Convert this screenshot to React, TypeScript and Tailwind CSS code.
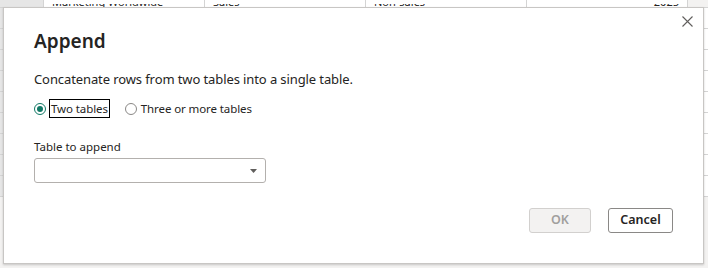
const font = { fontFamily: '"Noto Sans", "Open Sans", Arial, sans-serif' };

function SheetBackground() {
  const rows = Array.from({ length: 9 });
  return (
    <div className="absolute inset-0 flex flex-col bg-[#f3f2f1]">
      <div className="flex h-[8px] overflow-hidden border-b border-[#d4d4d4]">
        <div className="w-[44px] shrink-0 border-r border-[#d4d4d4] bg-[#e6e6e6]" />
        {["Marketing Worldwide", "Sales", "Non-sales", "2025"].map((t, i) => (
          <div
            key={i}
            className={`flex w-[161px] shrink-0 flex-col border-r border-[#d4d4d4] bg-white px-2 pt-[4px] ${
              i === 3 ? "text-right" : ""
            }`}
          >
            {/* only the bottom edge of the cell text peeks out above the dialog */}
            <div className="flex h-[3px] flex-col justify-end overflow-hidden">
              <div className="shrink-0 text-[11px] leading-[10px] text-[#252423]">{t}</div>
            </div>
          </div>
        ))}
      </div>
      {rows.map((_, i) => (
        <div key={i} className="flex h-[21px] border-b border-[#d4d4d4] bg-white">
          <div className="w-[44px] shrink-0 bg-[#e6e6e6]" />
        </div>
      ))}
    </div>
  );
}

export default function App() {
  return (
    <div className="relative h-[268px] w-[708px] overflow-hidden" style={font}>
      <SheetBackground />

      <div className="absolute left-[3px] top-[7px] flex h-[257px] w-[701px] flex-col border border-[#c8c6c4] bg-white pl-[30px] pr-[30px] shadow-[0_1px_2px_rgba(0,0,0,0.18)]">
        <button className="absolute right-[10px] top-[8px] flex h-[11px] w-[11px] items-center justify-center text-[#605e5c]">
          <svg width="11" height="11" viewBox="0 0 11 11" fill="none" stroke="currentColor" strokeWidth="1.1">
            <path d="M0.5 0.5 L10.5 10.5 M10.5 0.5 L0.5 10.5" />
          </svg>
        </button>

        <h1 className="mt-[19px] text-[19px] font-semibold leading-[28px] text-[#252423]">Append</h1>

        <p className="mt-[15px] text-[13px] leading-[18px] tracking-[-0.1px] text-[#252423]">
          Concatenate rows from two tables into a single table.
        </p>

        <div className="mt-[11px] flex items-center text-[11.5px] leading-[15px] tracking-[-0.1px] text-[#252423]">
          <label className="flex items-center">
            <span className="flex h-[12px] w-[12px] items-center justify-center rounded-full border border-[#117865]">
              <span className="h-[6px] w-[6px] rounded-full bg-[#117865]" />
            </span>
            <span className="ml-[3px] border border-black px-[1px] py-[1px]">Two tables</span>
          </label>
          <label className="ml-[15px] flex items-center">
            <span className="h-[12px] w-[12px] rounded-full border border-[#8a8886]" />
            <span className="ml-[4px]">Three or more tables</span>
          </label>
        </div>

        <div className="mt-[21px] text-[11.5px] leading-[16px] text-[#252423]">Table to append</div>

        <div className="mt-[3px] flex h-[25px] w-[232px] items-center justify-end rounded-[3px] border border-[#b3b0ad] pr-[8px]">
          <svg width="7" height="4" viewBox="0 0 7 4" fill="#605e5c">
            <path d="M0 0 H7 L3.5 4 Z" />
          </svg>
        </div>

        <div className="mt-[25px] flex justify-end gap-[17px]">
          <button
            disabled
            className="h-[25px] w-[62px] rounded-[3px] border border-[#d2d0ce] bg-[#f3f2f1] text-[12.5px] font-semibold text-[#a19f9d]"
          >
            OK
          </button>
          <button className="h-[25px] w-[65px] rounded-[3px] border border-[#8a8886] bg-white text-[12.5px] font-semibold text-[#252423]">
            Cancel
          </button>
        </div>
      </div>
    </div>
  );
}
